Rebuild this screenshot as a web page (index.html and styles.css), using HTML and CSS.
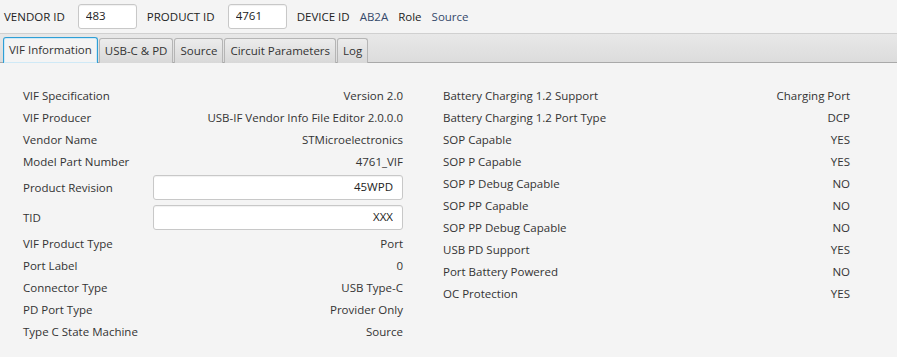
FILE: index.html
```html
<!DOCTYPE html>
<html lang="en">
<head>
  <meta charset="UTF-8" />
  <title>VIF Editor</title>
  <link rel="stylesheet" href="styles.css">
</head>
<body>
  <div class="top-bar">
    <span class="top-label">VENDOR ID</span>
    <input class="top-field" type="text" value="483">
    <span class="top-label">PRODUCT ID</span>
    <input class="top-field" type="text" value="4761">
    <span class="top-label">DEVICE ID</span>
    <span class="top-value">AB2A</span>
    <span class="top-label">Role</span>
    <span class="top-value">Source</span>
  </div>

  <div class="tab-header">
    <div class="tab selected">VIF Information</div>
    <div class="tab">USB-C &amp; PD</div>
    <div class="tab">Source</div>
    <div class="tab">Circuit Parameters</div>
    <div class="tab">Log</div>
  </div>

  <div class="tab-content">
    <div class="column left-col">
      <div class="row"><span>VIF Specification</span><span>Version 2.0</span></div>
      <div class="row"><span>VIF Producer</span><span>USB-IF Vendor Info File Editor 2.0.0.0</span></div>
      <div class="row"><span>Vendor Name</span><span>STMicroelectronics</span></div>
      <div class="row"><span>Model Part Number</span><span>4761_VIF</span></div>
      <div class="row field-row"><span>Product Revision</span><input class="text-field" type="text" value="45WPD"></div>
      <div class="row field-row"><span>TID</span><input class="text-field" type="text" value="XXX"></div>
      <div class="row"><span>VIF Product Type</span><span>Port</span></div>
      <div class="row"><span>Port Label</span><span>0</span></div>
      <div class="row"><span>Connector Type</span><span>USB Type-C</span></div>
      <div class="row"><span>PD Port Type</span><span>Provider Only</span></div>
      <div class="row"><span>Type C State Machine</span><span>Source</span></div>
    </div>
    <div class="column right-col">
      <div class="row"><span>Battery Charging 1.2 Support</span><span>Charging Port</span></div>
      <div class="row"><span>Battery Charging 1.2 Port Type</span><span>DCP</span></div>
      <div class="row"><span>SOP Capable</span><span>YES</span></div>
      <div class="row"><span>SOP P Capable</span><span>YES</span></div>
      <div class="row"><span>SOP P Debug Capable</span><span>NO</span></div>
      <div class="row"><span>SOP PP Capable</span><span>NO</span></div>
      <div class="row"><span>SOP PP Debug Capable</span><span>NO</span></div>
      <div class="row"><span>USB PD Support</span><span>YES</span></div>
      <div class="row"><span>Port Battery Powered</span><span>NO</span></div>
      <div class="row"><span>OC Protection</span><span>YES</span></div>
    </div>
  </div>
</body>
</html>
```

FILE: styles.css
```css
* { box-sizing: border-box; margin: 0; padding: 0; }
body {
  font-family: 'Open Sans', 'Noto Sans', sans-serif;
  font-size: 11.5px;
  color: #333;
  background: #f4f4f4;
  width: 897px;
  height: 357px;
  overflow: hidden;
}

.top-bar {
  height: 33px;
  display: flex;
  align-items: center;
  padding-left: 4px;
  gap: 10px;
}
.top-label { color: #222; }
.top-label + .top-field { margin-left: 3px; }
.top-value { color: #34496b; }
.top-field {
  width: 59px;
  height: 25px;
  padding: 0 7px 3px;
  font: inherit;
  color: #222;
  background: #fff;
  border: 1px solid #c8c8c8;
  border-radius: 3px;
  box-shadow: inset 0 1px 1px rgba(0,0,0,0.06);
}

.tab-header {
  height: 30px;
  display: flex;
  align-items: flex-end;
  gap: 1px;
  padding-left: 3px;
  background: linear-gradient(#e8e8e8, #dcdcdc);
  border-top: 1px solid #d0d0d0;
  border-bottom: 1px solid #a9a9a9;
}
.tab {
  height: 25px;
  margin-bottom: -1px;
  padding: 0 5px 2px;
  display: flex;
  align-items: center;
  color: #333;
  background: linear-gradient(#ececec, #d8d8d8);
  border: 1px solid #b5b5b5;
  border-bottom: none;
  border-radius: 3px 3px 0 0;
}
.tab.selected {
  height: 26px;
  background: #f4f4f4;
  border: 1px solid #2f9fd6;
  border-bottom: none;
  box-shadow: inset 0 0 0 1px #cfe9f6;
}

.tab-content {
  display: flex;
  gap: 40px;
  padding: 21px 0 0 23px;
}
.column { display: flex; flex-direction: column; }
.left-col { width: 380px; }
.right-col { width: 407px; }
.row {
  height: 22px;
  display: flex;
  align-items: center;
  justify-content: space-between;
}
.field-row { height: 30px; }
.text-field {
  width: 250px;
  height: 25px;
  padding: 0 9px 2px;
  font: inherit;
  color: #222;
  text-align: right;
  background: #fff;
  border: 1px solid #c8c8c8;
  border-radius: 3px;
  box-shadow: inset 0 1px 1px rgba(0,0,0,0.06);
}
```
